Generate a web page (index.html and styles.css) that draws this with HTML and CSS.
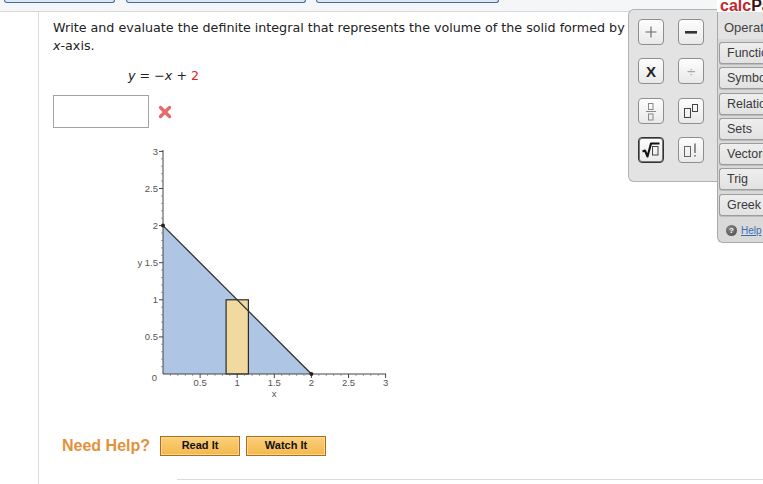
FILE: index.html
```html
<!DOCTYPE html>
<html lang="en">
<head>
<meta charset="utf-8">
<title>Volume integral</title>
<link rel="stylesheet" href="styles.css">
</head>
<body>
<div class="topbar">
  <div class="tab tab-a"></div>
  <div class="tab tab-b"></div>
  <div class="tab tab-c"></div>
</div>
<div class="main">
  <div class="gutter"></div>
  <div class="content">
    <p class="question">Write and evaluate the definite integral that represents the volume of the solid formed by<br><i>x</i>-axis.</p>
    <p class="equation"><i>y</i> = −<i>x</i> + <span class="red">2</span></p>
    <div class="answer">
      <div class="input-box"></div>
      <svg class="wrong" width="14" height="14" viewBox="0 0 14 14"><path d="M2.5 2.5 L11.5 11.5 M11.5 2.5 L2.5 11.5" stroke="#e56b6b" stroke-width="3.4" stroke-linecap="round"/></svg>
    </div>
    <svg class="graph" width="280" height="270" viewBox="0 0 280 270">
      <polygon points="43,86.6 191.4,235 43,235" fill="#aec5e4"/>
      <rect x="106.1" y="160.8" width="22.3" height="74.2" fill="#f1da9f" stroke="#2b2b2b" stroke-width="1.2"/>
      <line x1="43" y1="86.6" x2="191.4" y2="235" stroke="#2f2f2f" stroke-width="1.3"/>
      <g stroke="#444" stroke-width="1">
        <line x1="43" y1="11" x2="43" y2="235"/>
        <line x1="43" y1="235" x2="266" y2="235"/>
        <path d="M39 12.4H43M39 49.5H43M39 86.6H43M39 123.7H43M39 160.8H43M39 197.9H43"/>
        <path d="M80.1 235V239M117.2 235V239M154.3 235V239M191.4 235V239M228.5 235V239M265.6 235V239"/>
      </g>
      <g stroke="#777" stroke-width="0.7">
        <path d="M41 19.8H43M41 27.2H43M41 34.7H43M41 42.1H43M41 56.9H43M41 64.4H43M41 71.8H43M41 79.2H43M41 94H43M41 101.5H43M41 108.9H43M41 116.3H43M41 131.1H43M41 138.6H43M41 146H43M41 153.4H43M41 168.2H43M41 175.7H43M41 183.1H43M41 190.5H43M41 205.3H43M41 212.8H43M41 220.2H43M41 227.6H43"/>
        <path d="M50.4 235V237M57.8 235V237M65.3 235V237M72.7 235V237M87.5 235V237M94.9 235V237M102.4 235V237M109.8 235V237M124.6 235V237M132.1 235V237M139.5 235V237M146.9 235V237M161.7 235V237M169.2 235V237M176.6 235V237M184 235V237M198.8 235V237M206.3 235V237M213.7 235V237M221.1 235V237M235.9 235V237M243.4 235V237M250.8 235V237M258.2 235V237"/>
      </g>
      <circle cx="43" cy="86.6" r="2" fill="#222"/>
      <circle cx="191.4" cy="235" r="2" fill="#222"/>
      <g class="ticklabels" text-anchor="end">
        <text x="38" y="16">3</text>
        <text x="38" y="53">2.5</text>
        <text x="38" y="90">2</text>
        <text x="38" y="127">y 1.5</text>
        <text x="38" y="164">1</text>
        <text x="38" y="201">0.5</text>
        <text x="37" y="242">0</text>
      </g>
      <g class="ticklabels" text-anchor="middle">
        <text x="80.1" y="247">0.5</text>
        <text x="117.2" y="247">1</text>
        <text x="154.3" y="247">1.5</text>
        <text x="191.4" y="247">2</text>
        <text x="228.5" y="247">2.5</text>
        <text x="265.6" y="247">3</text>
        <text x="154" y="258">x</text>
      </g>
    </svg>
    <div class="help-row">
      <span class="need-help">Need Help?</span>
      <span class="help-btn btn-read">Read It</span>
      <span class="help-btn btn-watch">Watch It</span>
    </div>
    <div class="rule"></div>
  </div>
</div>

<div class="calcpad">
  <div class="keypad">
    <div class="key"><svg width="24" height="24" viewBox="0 0 24 24"><path d="M6.5 12H17.5M12 6.5V17.5" stroke="#666" stroke-width="1.1"/></svg></div>
    <div class="key"><svg width="24" height="24" viewBox="0 0 24 24"><rect x="6" y="11" width="12" height="2.6" fill="#333"/></svg></div>
    <div class="key key-text key-times">X</div>
    <div class="key key-text key-div">÷</div>
    <div class="key"><svg width="24" height="24" viewBox="0 0 24 24"><rect x="9.5" y="4.5" width="4.5" height="6" fill="none" stroke="#888"/><path d="M7 12.5H17" stroke="#888"/><rect x="9.5" y="15" width="4.5" height="6" fill="none" stroke="#888"/></svg></div>
    <div class="key"><svg width="24" height="24" viewBox="0 0 24 24"><rect x="5.5" y="9.5" width="6" height="9" fill="none" stroke="#444"/><rect x="13.5" y="5.5" width="5" height="7" fill="none" stroke="#444"/></svg></div>
    <div class="key key-dark"><svg width="24" height="24" viewBox="0 0 24 24"><path d="M3.5 13.5L6 12.5L8.5 18.5L12 5.5H20.5" fill="none" stroke="#111" stroke-width="2.1" stroke-linejoin="round"/><rect x="13.5" y="8.5" width="5.5" height="8.5" fill="none" stroke="#444"/></svg></div>
    <div class="key"><svg width="24" height="24" viewBox="0 0 24 24"><rect x="5.5" y="8.5" width="6" height="10" fill="none" stroke="#666"/><path d="M16 5.5V15" stroke="#666" stroke-width="1.4"/><rect x="15.3" y="17" width="1.4" height="1.6" fill="#666"/></svg></div>
  </div>
  <div class="side">
    <div class="brand"><span class="brand-calc">calc</span>Pad</div>
    <div class="side-body">
      <div class="op-tab">Operations</div>
      <div class="cat-list">
        <div class="cat">Functions</div>
        <div class="cat">Symbols</div>
        <div class="cat">Relations</div>
        <div class="cat">Sets</div>
        <div class="cat">Vectors</div>
        <div class="cat">Trig</div>
        <div class="cat">Greek</div>
      </div>
      <div class="help-link"><span class="help-icon">?</span><span class="help-text">Help</span></div>
    </div>
  </div>
</div>
</body>
</html>
```

FILE: styles.css
```css
html, body {
  margin: 0;
  padding: 0;
  background: #fff;
  overflow: hidden;
}
body {
  font-family: "DejaVu Sans", Verdana, sans-serif;
  color: #222;
  width: 763px;
  height: 484px;
  position: relative;
}
.topbar {
  height: 11px;
  background: #f5f6f7;
  border-bottom: 1px solid #d8d8d8;
  display: flex;
  align-items: flex-start;
}
.tab {
  height: 2px;
  border: 1px solid #3d6c9e;
  border-top: 0;
  border-radius: 0 0 4px 4px;
  background: #dfe7f0;
}
.tab-a { margin-left: 4px; width: 109px; }
.tab-b { margin-left: 11px; width: 178px; }
.tab-c { margin-left: 10px; width: 181px; }

.main {
  display: flex;
  height: 472px;
}
.gutter {
  width: 38px;
  border-right: 1px solid #dcdcdc;
  flex: none;
}
.content {
  flex: 1;
  padding-left: 14px;
  padding-top: 7px;
}
.question {
  margin: 0;
  font-size: 12.7px;
  line-height: 18px;
}
.equation {
  margin: 12px 0 0 75px;
  font-size: 12.7px;
  line-height: 18px;
}
.red { color: #d42a2a; }
.answer {
  display: flex;
  align-items: center;
  gap: 9px;
  margin-top: 10px;
}
.input-box {
  width: 94px;
  height: 31px;
  border: 1px solid #a3a3a3;
  background: #fff;
}
.wrong { display: block; }
.graph {
  display: block;
  margin: 11px 0 0 67px;
}
.ticklabels text {
  font-family: "Liberation Sans", Arial, sans-serif;
  font-size: 9.5px;
  fill: #555;
}
.help-row {
  display: flex;
  align-items: center;
  margin: 27px 0 0 9px;
  height: 20px;
}
.need-help {
  font-family: "Liberation Sans", Arial, sans-serif;
  font-weight: bold;
  font-size: 16px;
  color: #e2913b;
  margin-right: 10px;
}
.help-btn {
  box-sizing: border-box;
  height: 20px;
  line-height: 17px;
  text-align: center;
  font-family: "Liberation Sans", Arial, sans-serif;
  font-weight: bold;
  font-size: 11px;
  color: #111;
  background: linear-gradient(#fbd07a, #f3b84e);
  border: 1px solid #a86e24;
  box-shadow: inset 0 0 0 1px #fbd889;
}
.btn-read { width: 80px; margin-right: 6px; }
.btn-watch { width: 80px; }
.rule {
  margin: 23px 0 0 124px;
  border-top: 1px solid #dcdcdc;
}

/* calcPad palette floating over the page */
.calcpad {
  position: absolute;
  top: 0;
  left: 628px;
  right: 0;
  height: 250px;
  display: flex;
  align-items: flex-start;
  overflow: hidden;
}
.keypad {
  box-sizing: border-box;
  margin-top: 9px;
  width: 89px;
  height: 173px;
  background: #e3e3e3;
  border: 1px solid #b2b2b2;
  border-right: 0;
  border-radius: 6px 0 0 6px;
  padding: 9px 0 0 9px;
  display: grid;
  grid-template-columns: 26px 26px;
  column-gap: 14px;
  row-gap: 13.3px;
  align-content: start;
  flex: none;
}
.key {
  box-sizing: border-box;
  width: 26px;
  height: 26px;
  border: 1px solid #8e8e8e;
  border-radius: 4px;
  background: linear-gradient(#fdfdfd, #e9e9e9);
  display: flex;
  align-items: center;
  justify-content: center;
}
.key svg { display: block; }
.key-dark {
  border-color: #333;
  box-shadow: inset 0 0 0 1px #777;
}
.key-text {
  font-family: "Liberation Sans", Arial, sans-serif;
  line-height: 1;
}
.key-times {
  font-weight: bold;
  font-size: 15px;
  color: #222;
}
.key-div {
  font-size: 15px;
  color: #a5a5a5;
}
.side {
  width: 47px;
  flex: none;
  display: flex;
  flex-direction: column;
}
.brand {
  height: 12px;
  line-height: 12px;
  padding-left: 3px;
  font-family: "Liberation Sans", Arial, sans-serif;
  font-weight: bold;
  font-size: 16px;
  color: #3a1010;
  white-space: nowrap;
  background: #fff;
  overflow: hidden;
}
.brand-calc { color: #c4262b; }
.side-body {
  height: 230px;
  background: #d9d9d9;
  border-left: 1px solid #a9a9a9;
  border-bottom: 1px solid #a9a9a9;
  border-radius: 0 0 0 6px;
  font-family: "Liberation Sans", Arial, sans-serif;
  white-space: nowrap;
  overflow: hidden;
}
.op-tab {
  height: 27px;
  line-height: 32px;
  padding-left: 6px;
  font-size: 13px;
  color: #444;
  background: #e3e3e3;
}
.cat-list {
  display: flex;
  flex-direction: column;
  gap: 3.3px;
  margin-top: 3px;
  padding-left: 1px;
}
.cat {
  box-sizing: border-box;
  height: 22px;
  line-height: 21px;
  padding-left: 7px;
  font-size: 12.5px;
  color: #3a3a3a;
  background: linear-gradient(#eeeeee, #e2e2e2);
  border: 1px solid #9c9c9c;
  border-right: 0;
  border-radius: 3px 0 0 3px;
  box-shadow: 0 1px 0 #bcbcbc;
}
.help-link {
  display: flex;
  align-items: center;
  margin: 8px 0 0 8px;
  height: 14px;
}
.help-icon {
  width: 11px;
  height: 11px;
  border-radius: 50%;
  background: radial-gradient(circle at 40% 35%, #8a8a8a, #444);
  color: #fff;
  font-size: 8px;
  font-weight: bold;
  line-height: 11px;
  text-align: center;
  margin-right: 4px;
}
.help-text {
  font-size: 10px;
  color: #3b6fb0;
  text-decoration: underline;
}
```
